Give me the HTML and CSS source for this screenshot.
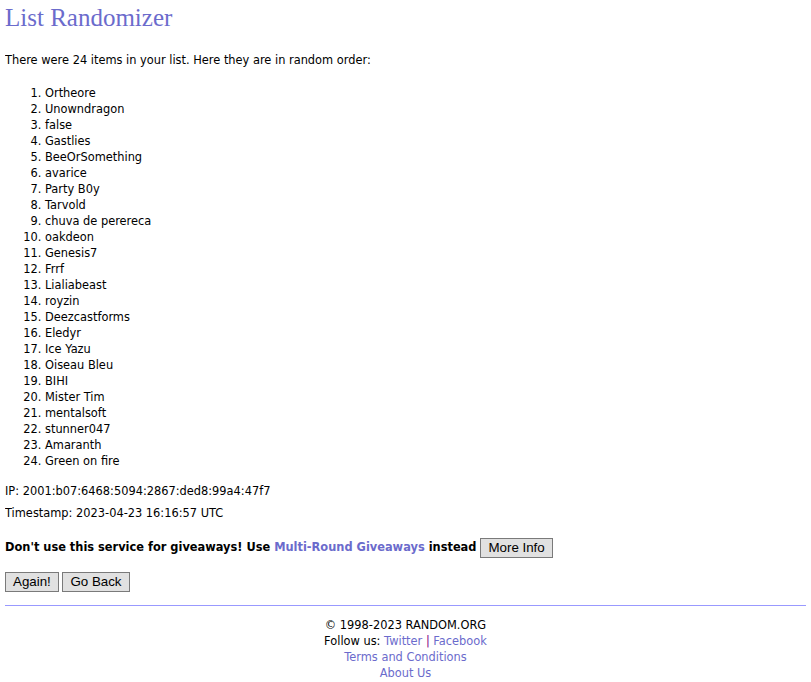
FILE: index.html
```html
<!DOCTYPE html>
<html lang="en">
<head>
    <meta charset="UTF-8">
    <title>RANDOM.ORG - List Randomizer</title>
    <link rel="stylesheet" href="styles.css">
</head>
<body>
    <h1 class="title">List Randomizer</h1>

    <p class="intro">There were 24 items in your list. Here they are in random order:</p>

    <ol class="result-list">
        <li>Ortheore</li>
        <li>Unowndragon</li>
        <li>false</li>
        <li>Gastlies</li>
        <li>BeeOrSomething</li>
        <li>avarice</li>
        <li>Party B0y</li>
        <li>Tarvold</li>
        <li>chuva de perereca</li>
        <li>oakdeon</li>
        <li>Genesis7</li>
        <li>Frrf</li>
        <li>Lialiabeast</li>
        <li>royzin</li>
        <li>Deezcastforms</li>
        <li>Eledyr</li>
        <li>Ice Yazu</li>
        <li>Oiseau Bleu</li>
        <li>BIHI</li>
        <li>Mister Tim</li>
        <li>mentalsoft</li>
        <li>stunner047</li>
        <li>Amaranth</li>
        <li>Green on fire</li>
    </ol>

    <p class="meta">IP: 2001:b07:6468:5094:2867:ded8:99a4:47f7</p>
    <p class="meta">Timestamp: 2023-04-23 16:16:57 UTC</p>

    <p class="warning">Don't use this service for giveaways! Use <a href="#">Multi-Round Giveaways</a> instead <button class="btn">More Info</button></p>

    <form class="actions">
        <button type="button" class="btn">Again!</button>
        <button type="button" class="btn">Go Back</button>
    </form>

    <hr class="divider">

    <div class="footer">
        <div>&copy; 1998-2023 RANDOM.ORG</div>
        <div>Follow us: <a href="#">Twitter</a> <span class="sep">|</span> <a href="#">Facebook</a></div>
        <div><a href="#">Terms and Conditions</a></div>
        <div><a href="#">About Us</a></div>
    </div>
</body>
</html>
```

FILE: styles.css
```css
:root {
    --link: #6b6bcc;
    --rule: #9999ff;
}

body {
    margin: 8px 5px;
    background: white;
    color: black;
    font-family: 'DejaVu Sans', Verdana, sans-serif;
    font-size: 11.4px;
    line-height: 16px;
}

a {
    color: var(--link);
    text-decoration: none;
}

.title {
    font-family: 'Liberation Serif', Georgia, serif;
    font-weight: normal;
    font-size: 25px;
    line-height: 20px;
    color: var(--link);
    margin: 0 0 24px;
}

.intro {
    margin: 0 0 17px;
}

.result-list {
    margin: 0 0 14px;
    padding-left: 40px;
}

.meta {
    margin: 0 0 6px;
}

.warning {
    font-weight: bold;
    margin: 16px 0 14px;
    line-height: 20px;
}

.warning a {
    font-weight: bold;
}

.btn {
    font-family: 'Liberation Sans', Arial, sans-serif;
    font-size: 13.33px;
    line-height: 16px;
    padding: 1px 7px;
    background: #e1e1e1;
    border: 1px solid #7a7a7a;
    border-radius: 0;
    color: black;
    vertical-align: middle;
}

.actions {
    margin: 0 0 13px;
}

.divider {
    border: none;
    border-top: 1px solid var(--rule);
    margin: 0 0 11px;
}

.footer {
    text-align: center;
}

.sep {
    color: #800080;
}
```
